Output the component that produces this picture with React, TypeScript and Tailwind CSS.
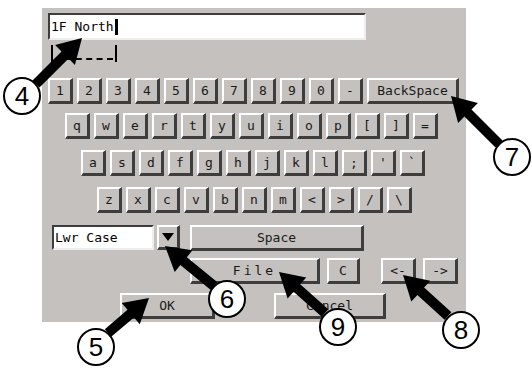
import React from "react";

const mono = { fontFamily: '"DejaVu Sans Mono", "Liberation Mono", monospace' };

const rows = [
  ["1", "2", "3", "4", "5", "6", "7", "8", "9", "0", "-"],
  ["q", "w", "e", "r", "t", "y", "u", "i", "o", "p", "[", "]", "="],
  ["a", "s", "d", "f", "g", "h", "j", "k", "l", ";", "'", "`"],
  ["z", "x", "c", "v", "b", "n", "m", "<", ">", "/", "\\"],
];

const rowIndent = ["ml-[6px]", "ml-[23px]", "ml-[39px]", "ml-[55px]"];
const rowTop = ["mt-[16px]", "mt-[9px]", "mt-[11px]", "mt-[11px]"];

const bevel =
  "flex items-center justify-center bg-[#c4c1be] border-t-2 border-l-2 border-b-[3px] border-r-[3px] border-t-white border-l-white border-b-[#3d3d3d] border-r-[#3d3d3d] text-[13px] text-[#1a1a1a]";

const Key = ({ label, className = "" }: { label: string; className?: string }) => (
  <div className={`${bevel} h-[26px] ${className}`} style={mono}>
    {label}
  </div>
);

// annotation callouts: circle centre, arrow tail and tip
const callouts = [
  { n: "4", cx: 22, cy: 96, tail: [36, 84], tip: [82, 38] },
  { n: "7", cx: 512, cy: 157, tail: [499, 144], tip: [451, 96] },
  { n: "6", cx: 227, cy: 299, tail: [214, 286], tip: [165, 246] },
  { n: "5", cx: 96, cy: 347, tail: [108, 333], tip: [149, 298] },
  { n: "9", cx: 338, cy: 327, tail: [325, 313], tip: [279, 272] },
  { n: "8", cx: 461, cy: 330, tail: [448, 316], tip: [403, 275] },
];

function arrowPoints(tail: number[], tip: number[]) {
  const sw = 10;
  const hl = 24;
  const hw = 28;
  const dx = tip[0] - tail[0];
  const dy = tip[1] - tail[1];
  const len = Math.hypot(dx, dy);
  const ux = dx / len;
  const uy = dy / len;
  const nx = -uy;
  const ny = ux;
  const bx = tip[0] - ux * hl;
  const by = tip[1] - uy * hl;
  const pts = [
    [tail[0] + (nx * sw) / 2, tail[1] + (ny * sw) / 2],
    [bx + (nx * sw) / 2, by + (ny * sw) / 2],
    [bx + (nx * hw) / 2, by + (ny * hw) / 2],
    [tip[0], tip[1]],
    [bx - (nx * hw) / 2, by - (ny * hw) / 2],
    [bx - (nx * sw) / 2, by - (ny * sw) / 2],
    [tail[0] - (nx * sw) / 2, tail[1] - (ny * sw) / 2],
  ];
  return pts.map((p) => `${p[0].toFixed(1)},${p[1].toFixed(1)}`).join(" ");
}

export default function App() {
  return (
    <div className="relative w-[532px] h-[370px] bg-white overflow-hidden">
      <div className="ml-[42px] mt-[8px] w-[424px] h-[314px] bg-[#c4c1be] pt-[5px] flex flex-col">
        {/* input */}
        <div
          className="ml-[6px] w-[318px] h-[27px] bg-white border-2 border-t-[#3d3d3d] border-l-[#3d3d3d] border-b-[#eeeeee] border-r-[#eeeeee] flex items-center pl-[1px] text-[13px] text-black"
          style={mono}
        >
          <span>1F North</span>
          <span className="inline-block w-[3px] h-[16px] bg-black ml-[1px]" />
        </div>
        {/* cursor marker */}
        <div className="ml-[9px] mt-[5px] w-[66px] h-[17px] border-l-2 border-r-2 border-black flex items-end pb-[2px] px-[2px]">
          <div className="w-full border-b-2 border-dashed border-black" />
        </div>
        {/* key rows */}
        {rows.map((row, i) => (
          <div key={i} className={`flex gap-[4px] ${rowIndent[i]} ${rowTop[i]}`}>
            {row.map((k) => (
              <Key key={k} label={k} className="w-[25px]" />
            ))}
            {i === 0 && <Key label="BackSpace" className="w-[92px]" />}
          </div>
        ))}
        {/* case + space */}
        <div className="flex mt-[12px] ml-[10px] h-[25px]">
          <div
            className="w-[102px] h-[25px] bg-white border-2 border-t-[#3d3d3d] border-l-[#3d3d3d] border-b-[#eeeeee] border-r-[#eeeeee] flex items-center pl-[1px] text-[13px] text-black"
            style={mono}
          >
            Lwr Case
          </div>
          <div className={`${bevel} ml-[3px] w-[23px] h-[25px]`}>
            <svg width="12" height="8" viewBox="0 0 12 8">
              <polygon points="0,0 12,0 6,8" fill="#000" />
            </svg>
          </div>
          <Key label="Space" className="ml-[10px] w-[174px] h-[25px]" />
        </div>
        {/* file row */}
        <div className="flex mt-[8px] ml-[148px]">
          <Key label="File" className="w-[130px] tracking-[3px]" />
          <Key label="C" className="ml-[7px] w-[33px]" />
          <Key label="<-" className="ml-[21px] w-[35px]" />
          <Key label="->" className="ml-[7px] w-[35px]" />
        </div>
        {/* ok / cancel */}
        <div className="flex mt-[9px] ml-[78px]">
          <Key label="OK" className="w-[95px]" />
          <Key label="Cancel" className="ml-[59px] w-[112px]" />
        </div>
      </div>

      <svg className="absolute left-0 top-0" width="532" height="370" viewBox="0 0 532 370">
        {callouts.map((c) => (
          <g key={c.n}>
            <polygon points={arrowPoints(c.tail, c.tip)} fill="#000" />
            <circle cx={c.cx} cy={c.cy} r="18" fill="#fff" stroke="#000" strokeWidth="2" />
            <text
              x={c.cx}
              y={c.cy + 9}
              textAnchor="middle"
              fontSize="26"
              fontFamily='"Liberation Sans", Arial, sans-serif'
              fill="#000"
            >
              {c.n}
            </text>
          </g>
        ))}
      </svg>
    </div>
  );
}
